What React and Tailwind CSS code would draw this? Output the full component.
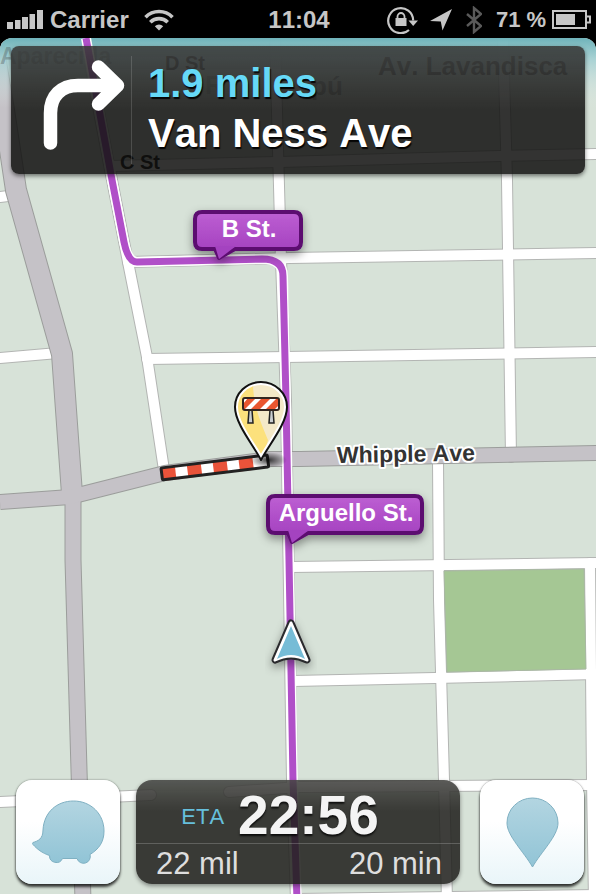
import React from 'react';

// Center lines of the streets, drawn twice: casing first, then fill
const streets = [
  'M275 38 L281 260 L286 400 L292 780 L296 900',
  'M503 38 L507 180 L511 457',
  'M85 38 L111 175 L128 262 L147 357 L164 470',
  'M110 166 L280 162 L500 156 L600 154',
  'M128 262 L290 258 L600 253',
  'M147 359 L286 357 L600 352',
  'M0 197 L16 195',
  'M0 358 L58 353',
  'M438 460 L439 600 L444 780 L447 900',
  'M291 567 L600 563',
  'M293 681 L435 678 L600 674',
  'M590 563 L592 780 L594 900',
  'M0 802 L130 796 L151 795',
  'M229 792 L300 787 L600 785',
  'M296 899 L600 895',
];

const avenues = [
  { d: 'M-8 38 L4 110 L16 190 L62 354 L72 494', width: 20 },
  { d: 'M73 490 L73 560 L79 770 L83 900', width: 15 },
  { d: 'M0 502 L70 497 L165 473 L270 459 L300 459 L600 453', width: 14 },
];

const route =
  'M86 38 L112 180 L124 242 Q128 262 137 262 L262 259 Q283 259 283 276 L286 400 L289 560 L293 780 L297 900';

const pinShape = 'M261 460 C254 446 235 424 235 407 A26 25 0 0 1 287 407 C287 424 268 446 261 460 Z';

const StreetBubble = ({ x, y, width, name }) => {
  const height = 37;
  const r = 7;
  const right = x + width;
  const bottom = y + height;
  const d = `M${x + r} ${y} H${right - r} Q${right} ${y} ${right} ${y + r} V${bottom - r} Q${right} ${bottom} ${right - r} ${bottom} H${x + 40} L${x + 24} ${bottom + 9} L${x + 20} ${bottom} H${x + r} Q${x} ${bottom} ${x} ${bottom - r} V${y + r} Q${x} ${y} ${x + r} ${y} Z`;

  return (
    <g>
      <path d={d} fill="url(#bubble)" stroke="#5b0f70" strokeWidth="4" strokeLinejoin="round" filter="url(#drop)" />
      <path d={`M${x + 20} ${bottom - 3} H${x + 41} L${x + 24} ${bottom + 10} Z`} fill="#a443c0" />
      <text
        x={x + width / 2 + 1}
        y={y + 25}
        textAnchor="middle"
        fontSize="24"
        fontWeight="bold"
        fill="#fff"
      >
        {name}
      </text>
    </g>
  );
};

const Map = () => (
  <svg
    className="absolute inset-0 h-full w-full"
    viewBox="0 38 596 856"
    preserveAspectRatio="xMidYMin slice"
    role="img"
    aria-label="Map"
  >
    <defs>
      <linearGradient id="sky" x1="0" y1="0" x2="0" y2="1">
        <stop offset="0" stopColor="#6fb3ba" />
        <stop offset="0.3" stopColor="#a3d0d3" stopOpacity="0.9" />
        <stop offset="1" stopColor="#dfeae6" stopOpacity="0" />
      </linearGradient>
      <linearGradient id="bubble" x1="0" y1="0" x2="0" y2="1">
        <stop offset="0" stopColor="#bd5fd3" />
        <stop offset="1" stopColor="#a03cbc" />
      </linearGradient>
      <radialGradient id="pinShadow">
        <stop offset="0" stopColor="#000" stopOpacity="0.75" />
        <stop offset="1" stopColor="#000" stopOpacity="0" />
      </radialGradient>
      <filter id="drop" x="-30%" y="-30%" width="160%" height="180%">
        <feDropShadow dx="0" dy="4" stdDeviation="5" floodColor="#000" floodOpacity="0.4" />
      </filter>
      <clipPath id="pinClip">
        <path d={pinShape} />
      </clipPath>
      <clipPath id="boardClip">
        <rect x="243" y="398" width="36" height="12" rx="2" />
      </clipPath>
    </defs>

    <rect x="0" y="38" width="596" height="862" fill="#d7e2d8" />

    {/* Streets */}
    <g fill="none" strokeLinecap="round" strokeLinejoin="round">
      {streets.map((d) => (
        <path key={d} d={d} stroke="#b3b5b3" strokeWidth="12" />
      ))}
      {streets.map((d) => (
        <path key={d} d={d} stroke="#fff" strokeWidth="10" />
      ))}
      {avenues.map(({ d, width }) => (
        <path key={d} d={d} stroke="#9b9d9b" strokeWidth={width + 2} strokeLinecap="butt" />
      ))}
      {avenues.map(({ d, width }) => (
        <path key={d} d={d} stroke="#c5c2c7" strokeWidth={width} strokeLinecap="butt" />
      ))}
    </g>

    {/* Park */}
    <path d="M444 571 L584 569 L586 669 L447 672 Z" fill="#a5c794" stroke="#a9b8a3" />

    <rect x="0" y="38" width="596" height="70" fill="url(#sky)" />

    {/* Street names */}
    <g fontWeight="bold" fill="#333">
      <text x="0" y="64" fontSize="23" fillOpacity="0.3">Aparecida</text>
      <text x="165" y="70" fontSize="20" fillOpacity="0.8">D St</text>
      <text x="378" y="75" fontSize="26" fillOpacity="0.6">Av. Lavandisca</text>
      <text x="205" y="94" fontSize="26" fillOpacity="0.2">R</text>
      <text x="311" y="95" fontSize="26" fillOpacity="0.4">pú</text>
      <text x="120" y="169" fontSize="20" fill="#000">C St</text>
    </g>

    {/* Active route */}
    <g fill="none" strokeLinejoin="round">
      <path d={route} stroke="#fff" strokeWidth="10" />
      <path d={route} stroke="#b04fc8" strokeWidth="7" />
    </g>

    <text
      x="337"
      y="463"
      fontSize="23"
      fontWeight="bold"
      fill="#333"
      stroke="#fff"
      strokeWidth="4"
      strokeLinejoin="round"
      paintOrder="stroke"
      transform="rotate(-1 337 463)"
    >
      Whipple Ave
    </text>

    {/* Closed road section */}
    <g transform="rotate(-7 161 468)">
      <rect x="161" y="468" width="107" height="13" fill="#fff" />
      {[0, 1, 2, 3].map((i) => (
        <rect key={i} x={161 + i * 26} y="468" width="14" height="13" fill="#e9533a" />
      ))}
      <rect x="161" y="468" width="107" height="12" rx="1" fill="none" stroke="#222" strokeWidth="3" />
    </g>

    {/* Hazard pin */}
    <ellipse cx="268" cy="460" rx="19" ry="8" fill="url(#pinShadow)" />
    <g clipPath="url(#pinClip)">
      <rect x="230" y="378" width="62" height="84" fill="#f4e9c8" />
      <path d="M230 378 H253 C252 405 262 425 268 440 L261 465 H230 Z" fill="#fce17c" />
      <path d={pinShape} fill="none" stroke="#fff" strokeWidth="6" />
    </g>
    <path d={pinShape} fill="none" stroke="#111" strokeWidth="2" strokeLinejoin="round" />
    <path d="M249 410 H252 L253 423 H248 Z M270 410 H273 L274 423 H269 Z" fill="#c9cdd0" stroke="#222" strokeWidth="1.5" />
    <g clipPath="url(#boardClip)">
      <rect x="243" y="398" width="36" height="12" fill="#e9562f" />
      <path d="M243 398 H248 L243 404 Z M244 410 L256 398 H262 L250 410 Z M259 410 L271 398 H277 L265 410 Z M274 410 L279 405 V410 Z" fill="#fff" />
    </g>
    <rect x="243" y="398" width="36" height="12" rx="2" fill="none" stroke="#33251f" strokeWidth="2" />

    <StreetBubble x={195} y={212} width={106} name="B St." />
    <StreetBubble x={268} y={496} width={154} name="Arguello St." />

    {/* Current position */}
    <g strokeLinejoin="round" filter="url(#drop)">
      <path d="M291 623 L307 660 Q291 652 275 660 Z" fill="#2c2c2e" stroke="#2c2c2e" strokeWidth="7" />
      <path d="M291 623 L307 660 Q291 652 275 660 Z" fill="#fff" stroke="#fff" strokeWidth="3" />
    </g>
    <path d="M291 626 L305 659 Q291 651 277 659 Z" fill="#76bcd6" />
  </svg>
);

const StatusBar = () => (
  <header className="grid h-[38px] grid-cols-[1fr_auto_1fr] items-center pt-px pr-[5px] pl-[7px] text-2xl leading-none font-bold text-[#c6c6c6]">
    <div className="flex items-center gap-[7px]">
      <svg className="h-[19px] w-9" viewBox="0 0 36 19" fill="currentColor">
        <path d="M0 12h6v7H0zM8 10h5.500v9H8zM15 7h6v12h-6zM22.500 4H28v15h-5.500zM30 0h6v19h-6z" />
      </svg>
      <span>Carrier</span>
      <svg className="ml-2 h-[22px] w-[30px]" viewBox="0 0 30 22" fill="none" stroke="currentColor" strokeWidth="3.600">
        <path d="M1.500 8.200a19 19 0 0 1 27 0M6.300 13.200a12.300 12.300 0 0 1 17.400 0" />
        <path d="M15 21.500l-4.200-4.300a6 6 0 0 1 8.400 0z" fill="currentColor" stroke="none" />
      </svg>
    </div>

    <time>11:04</time>

    <div className="flex items-center justify-end text-[22px]">
      {/* Rotation lock */}
      <svg className="h-7 w-8" viewBox="0 0 32 28" fill="none" stroke="currentColor" strokeWidth="2.200">
        <path d="M27.200 14.500A12.500 12.500 0 1 0 23 24" />
        <path d="M22.500 14.500h9.500l-4.800 5.500z" fill="currentColor" stroke="none" />
        <path d="M11.500 12.500V10.500a3.500 3.500 0 0 1 7 0v2" strokeWidth="1.800" />
        <path d="M9.500 12h11v8h-11z" fill="currentColor" stroke="none" />
      </svg>
      <svg className="ml-3 h-[22px] w-[22px]" viewBox="0 0 22 22" fill="currentColor">
        <path d="M22 0L12.500 21.500 10.800 12.500 0 12z" />
      </svg>
      <svg className="ml-3.5 h-7 w-4" viewBox="0 0 16 28" fill="none" stroke="#5a5a5a" strokeWidth="2.400">
        <path d="M1 8l14 12-7 6V2l7 6L1 20" />
      </svg>
      <span className="ml-3.5">71</span>
      <span className="ml-1.5">%</span>
      <svg className="ml-1.5 h-[19px] w-[39px]" viewBox="0 0 39 19" fill="none" stroke="currentColor" strokeWidth="2">
        <path d="M1 1h33v17H1zM34 6.500h4v6h-4" />
        <path d="M4 4h19v11H4z" fill="currentColor" stroke="none" />
      </svg>
    </div>
  </header>
);

const TurnPanel = () => (
  <section className="relative mx-[11px] mt-2 flex h-32 items-start rounded-lg bg-[rgba(18,18,16,0.86)] bg-linear-to-b from-white/15 to-transparent to-50% pt-2.5 shadow-[0_2px_4px_rgba(0,0,0,0.5)]">
    <svg className="ml-8 h-[98px] w-[84px] shrink-0" viewBox="43 56 84 98" fill="none" stroke="#fff" strokeWidth="13.500" strokeLinecap="round" strokeLinejoin="round" aria-label="Turn right">
      <path d="M50.500 143V113C50.500 96 61 85.500 78 85.500H114" />
      <path d="M98.500 67L117.500 85.500 98.500 104" />
    </svg>
    <div className="ml-1 h-[108px] w-px bg-white/15" />
    <div className="ml-4 pt-0.5 text-[40px] leading-[50px] font-bold text-white [text-shadow:1px_2px_1px_rgba(0,0,0,0.9)]">
      <p className="text-[#66d9f7]">1.9 miles</p>
      <p>Van Ness Ave</p>
    </div>
  </section>
);

const buttonClass =
  'flex h-26 w-26 shrink-0 items-center justify-center rounded-2xl bg-linear-to-b from-white from-40% to-[#e9f5f9] shadow-[0_3px_3px_rgba(0,0,0,0.75),0_0_2px_rgba(0,0,0,0.5)]';

const BottomBar = () => (
  <footer className="relative flex pr-3 pb-2.5 pl-4">
    <button type="button" aria-label="Menu" className={buttonClass}>
      <svg className="h-16 w-[73px]" viewBox="31 799 73 64">
        <defs>
          <linearGradient id="icon" x1="0" y1="0" x2="0" y2="1">
            <stop offset="0" stopColor="#b3d5e1" />
            <stop offset="1" stopColor="#91c4d6" />
          </linearGradient>
        </defs>
        <path
          d="M32 841.500C37 840 42 838 42 829C43 811 56 800 72.500 800C90 800 103 813 103 830C103 841 98 848 89 853.500A6.800 6.800 0 0 1 76 857.500H61.500A6.800 6.800 0 0 1 48.500 854.500C41 852 36 848 32 843.500Q31 842 32 841.500Z"
          fill="url(#icon)"
          stroke="#7fb0c2"
          strokeWidth="1"
        />
      </svg>
    </button>

    <section className="mr-5 ml-4 min-w-0 flex-1 overflow-hidden rounded-2xl bg-[rgba(30,30,27,0.86)] bg-linear-to-b from-white/15 to-transparent to-30% shadow-[0_2px_4px_rgba(0,0,0,0.4)]">
      <div className="flex h-16 items-center justify-center gap-3.5 border-b border-white/20 pr-9">
        <span className="pt-2.5 text-[22px] text-[#66bfdc]">ETA</span>
        <time className="pt-1.5 text-[55px] leading-[64px] font-bold text-[#f4f4f4] [text-shadow:0_2px_2px_rgba(0,0,0,0.8)]">22:56</time>
      </div>
      <div className="flex justify-between pr-[18px] pl-5 text-[31px] leading-10 text-[#dedede]">
        <span>22 mil</span>
        <span>20 min</span>
      </div>
    </section>

    <button type="button" aria-label="Report" className={buttonClass}>
      <svg className="h-[71px] w-[53px]" viewBox="506 796 53 71">
        <path
          d="M532.500 866C524 851 507 835 507 822A25.500 25 0 0 1 558 822C558 835 541 851 532.500 866Z"
          fill="url(#icon)"
          stroke="#7fb0c2"
          strokeWidth="1"
        />
      </svg>
    </button>
  </footer>
);

const App = () => (
  <div className="flex min-h-screen flex-col bg-black font-['Liberation_Sans',Arial,sans-serif] [font-kerning:none]">
    <StatusBar />
    <main className="relative flex flex-1 flex-col justify-between gap-10 overflow-hidden rounded-t-xl">
      <Map />
      <TurnPanel />
      <BottomBar />
    </main>
  </div>
);

export default App;
